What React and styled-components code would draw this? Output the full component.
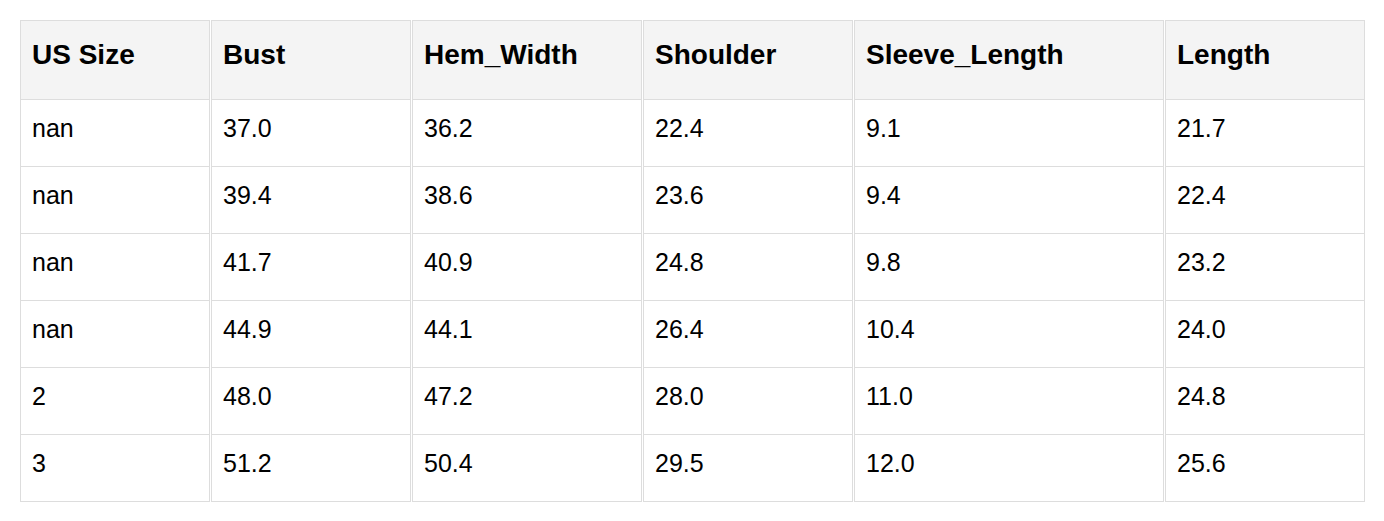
import React from "react";
import styled, { createGlobalStyle } from "styled-components";

const GlobalStyle = createGlobalStyle`
  * { box-sizing: border-box; }
  html, body { margin: 0; padding: 0; background: #ffffff; }
  body { font-family: "Liberation Sans", Arial, sans-serif; color: #000; }
`;

const Page = styled.div`
  padding: 20px 0 20px 19px;
`;

const Table = styled.table`
  width: 1347px;
  table-layout: fixed;
  border-collapse: separate;
  border-spacing: 1px 0;
  font-family: "Liberation Sans", Arial, sans-serif;
`;

const HeadRow = styled.tr`
  height: 80px;
`;

const BodyRow = styled.tr`
  height: 67px;
`;

const Th = styled.th`
  width: ${(p) => p.$w}px;
  background: #f4f4f4;
  border: 1px solid #dddddd;
  padding: 18px 11px 0;
  vertical-align: top;
  text-align: left;
  font-size: 28px;
  line-height: 32px;
  font-weight: 700;
  color: #000;
`;

const Td = styled.td`
  border: 1px solid #dddddd;
  border-top: none;
  padding: 14px 11px 0;
  vertical-align: top;
  text-align: left;
  font-size: 25px;
  line-height: 28px;
  color: #000;
`;

const columns = [
  { name: "US Size", w: 190 },
  { name: "Bust", w: 200 },
  { name: "Hem_Width", w: 230 },
  { name: "Shoulder", w: 210 },
  { name: "Sleeve_Length", w: 310 },
  { name: "Length", w: 200 },
];

const rows = [
  ["nan", "37.0", "36.2", "22.4", "9.1", "21.7"],
  ["nan", "39.4", "38.6", "23.6", "9.4", "22.4"],
  ["nan", "41.7", "40.9", "24.8", "9.8", "23.2"],
  ["nan", "44.9", "44.1", "26.4", "10.4", "24.0"],
  ["2", "48.0", "47.2", "28.0", "11.0", "24.8"],
  ["3", "51.2", "50.4", "29.5", "12.0", "25.6"],
];

export default function App() {
  return (
    <>
      <GlobalStyle />
      <Page>
        <Table>
          <thead>
            <HeadRow>
              {columns.map((c) => (
                <Th key={c.name} $w={c.w}>
                  {c.name}
                </Th>
              ))}
            </HeadRow>
          </thead>
          <tbody>
            {rows.map((r, i) => (
              <BodyRow key={i}>
                {r.map((v, j) => (
                  <Td key={j}>{v}</Td>
                ))}
              </BodyRow>
            ))}
          </tbody>
        </Table>
      </Page>
    </>
  );
}
